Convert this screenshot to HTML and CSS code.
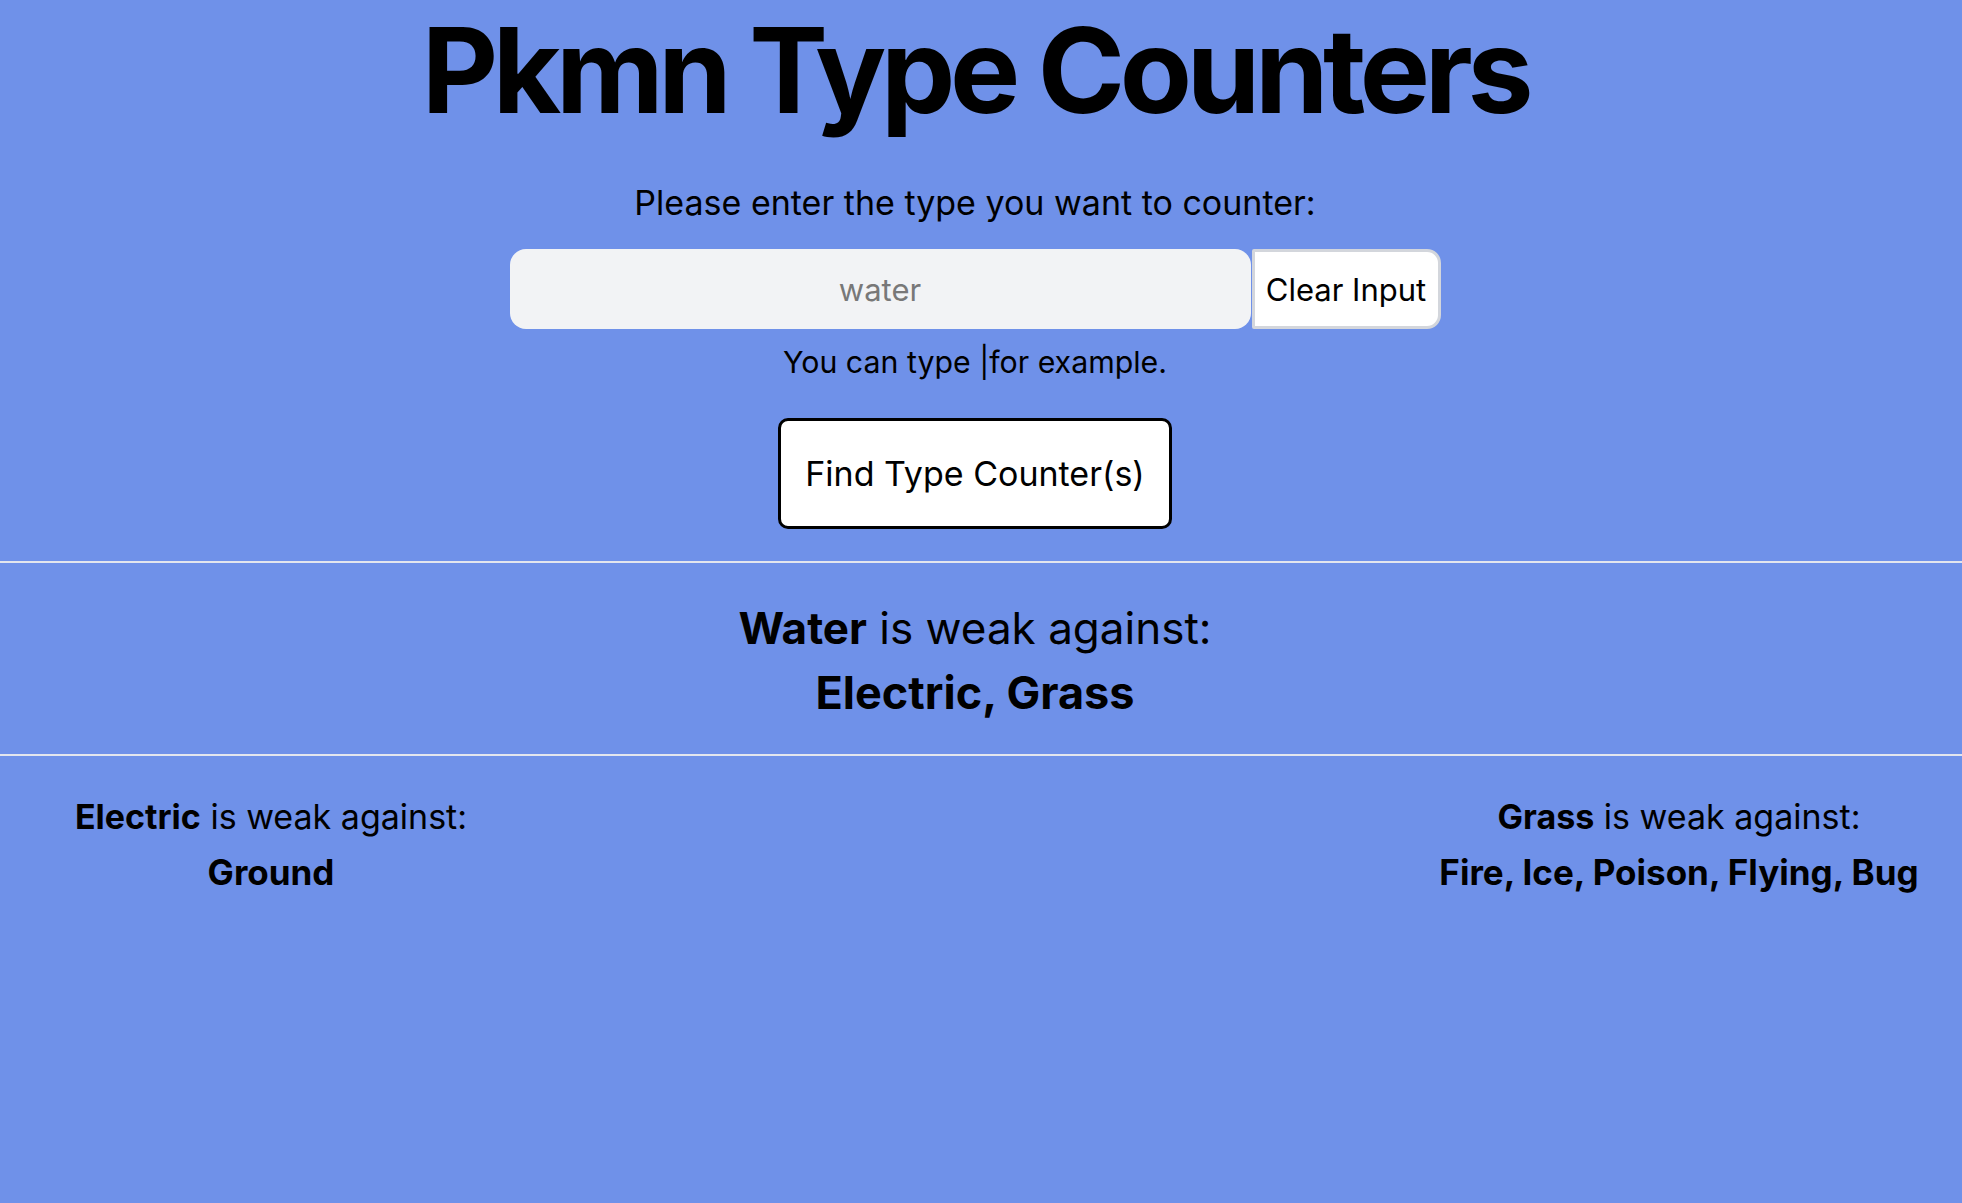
FILE: index.html
```html
<!DOCTYPE html>
<html lang="en">
<head>
<meta charset="utf-8">
<title>Pkmn Type Counters</title>
<link rel="stylesheet" href="styles.css">
</head>
<body>
<main class="app">
  <section class="search">
    <h1 class="title">Pkmn Type Counters</h1>
    <p class="prompt">Please enter the type you want to counter:</p>
    <div class="input-row">
      <input class="type-input" type="text" placeholder="water">
      <button class="clear-btn" type="button">Clear Input</button>
    </div>
    <p class="hint">You can type |for example.</p>
    <button class="find-btn" type="button">Find Type Counter(s)</button>
  </section>
  <hr class="divider divider-top">
  <section class="result">
    <div class="result-line"><strong>Water</strong> is weak against:</div>
    <div class="result-types">Electric, Grass</div>
  </section>
  <hr class="divider divider-bottom">
  <section class="sub-results">
    <div class="sub-col">
      <div class="sub-line"><strong>Electric</strong> is weak against:</div>
      <div class="sub-types">Ground</div>
    </div>
    <div class="sub-spacer"></div>
    <div class="sub-col">
      <div class="sub-line"><strong>Grass</strong> is weak against:</div>
      <div class="sub-types">Fire, Ice, Poison, Flying, Bug</div>
    </div>
  </section>
</main>
</body>
</html>
```
FILE: styles.css
```css
html, body {
  margin: 0;
  padding: 0;
}
body {
  background: #6f91e9;
  color: #000;
  font-family: Inter, "Liberation Sans", sans-serif;
  min-height: 1203px;
}
.app {
  display: flex;
  flex-direction: column;
}
.search {
  display: flex;
  flex-direction: column;
  align-items: center;
  text-align: center;
  padding-right: 12px;
}
.title {
  margin: 10px 0 0;
  font-size: 118px;
  line-height: 120px;
  font-weight: 700;
  letter-spacing: -5.3px;
}
.prompt {
  margin: 53px 0 0;
  font-size: 34px;
  line-height: 40px;
}
.input-row {
  display: flex;
  margin-top: 26px;
  height: 80px;
}
.type-input {
  box-sizing: border-box;
  width: 741px;
  height: 80px;
  border: none;
  border-radius: 16px;
  background: #f2f3f5;
  font-family: inherit;
  font-size: 31px;
  text-align: center;
  outline: none;
  padding: 0 12px;
}
.type-input::placeholder {
  color: #787878;
}
.clear-btn {
  box-sizing: border-box;
  width: 189px;
  height: 80px;
  margin-left: 1px;
  border: 3px solid #d3d6dc;
  border-radius: 2px 14px 14px 2px;
  background: #fff;
  color: #000;
  font-family: inherit;
  font-size: 31px;
  padding: 0;
}
.hint {
  margin: 15px 0 0;
  font-size: 30.3px;
  line-height: 36px;
}
.find-btn {
  box-sizing: border-box;
  margin-top: 38px;
  width: 394px;
  height: 111px;
  border: 3px solid #000;
  border-radius: 10px;
  background: #fff;
  color: #000;
  font-family: inherit;
  font-size: 34px;
  padding: 0;
}
.divider {
  margin: 0;
  border: none;
  height: 2px;
  background: #e3e6ee;
}
.divider-top {
  margin-top: 32px;
}
.result {
  margin-top: 39px;
  text-align: center;
  padding-right: 12px;
}
.result-line {
  font-size: 44px;
  line-height: 52px;
}
.result-types {
  margin-top: 13px;
  font-size: 45px;
  line-height: 52px;
  font-weight: 700;
}
.divider-bottom {
  margin-top: 35px;
}
.sub-results {
  display: grid;
  grid-template-columns: 542px 1fr 566px;
  margin-top: 41px;
}
.sub-col {
  text-align: center;
}
.sub-line {
  font-size: 34px;
  line-height: 40px;
}
.sub-types {
  margin-top: 15px;
  font-size: 35px;
  line-height: 40px;
  font-weight: 700;
}
```
